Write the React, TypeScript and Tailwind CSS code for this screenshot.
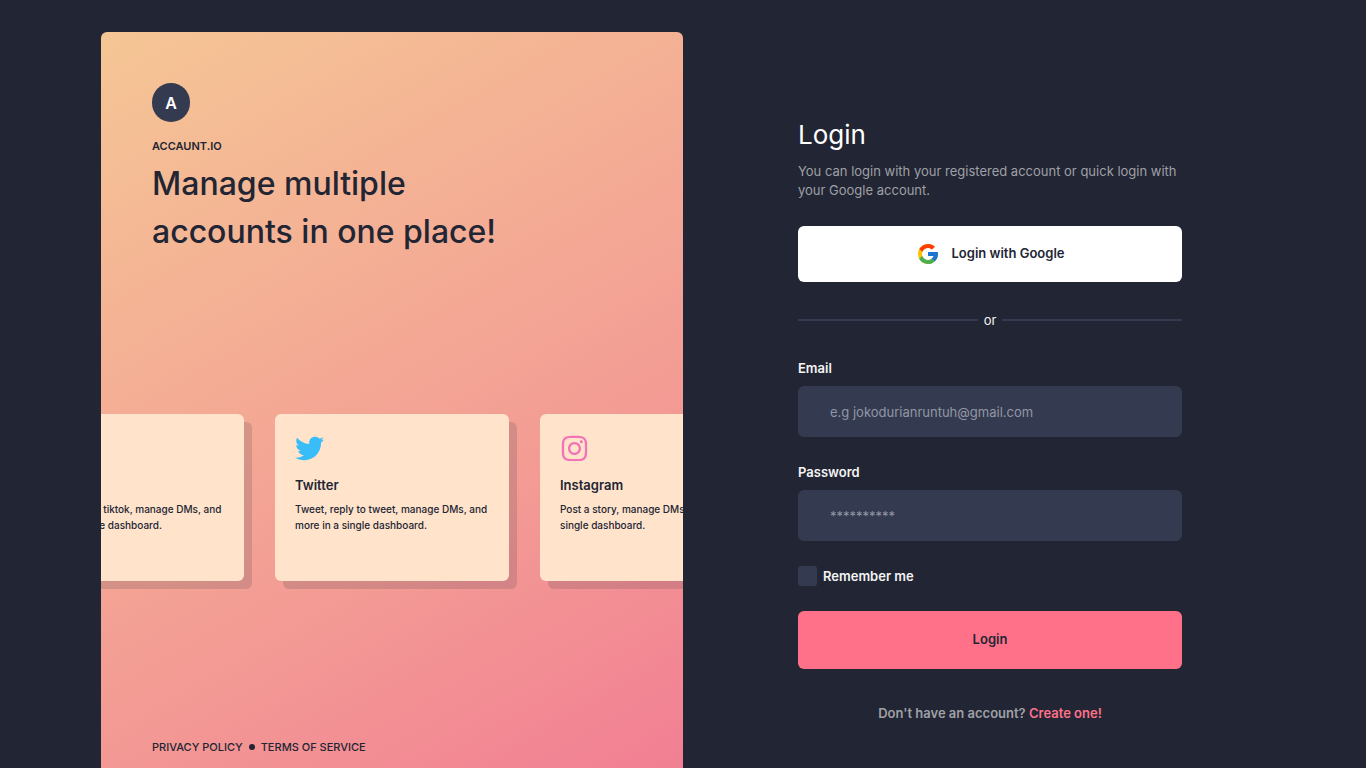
import { FaInstagram, FaTiktok, FaTwitter } from "react-icons/fa";
import { FcGoogle } from "react-icons/fc";
import type { ReactNode } from "react";

type Network = { name: string; text: string; icon: ReactNode };

const networks: Network[] = [
  {
    name: "Tiktok",
    text: "Post a video to tiktok, manage DMs, and more in a single dashboard.",
    icon: <FaTiktok className="size-[29px] text-[#222533]" />,
  },
  {
    name: "Twitter",
    text: "Tweet, reply to tweet, manage DMs, and more in a single dashboard.",
    icon: <FaTwitter className="size-[29px] text-[#38bdf8]" />,
  },
  {
    name: "Instagram",
    text: "Post a story, manage DMs, and more in a single dashboard.",
    icon: <FaInstagram className="size-[29px] text-[#f472b6]" />,
  },
];

function NetworkCard({ name, text, icon }: Network) {
  return (
    <article className="h-[167px] w-[234px] shrink-0 rounded-md bg-[#ffe3cb] py-5 pr-3 pl-5 shadow-[8px_8px_0_rgba(34,37,51,0.15)]">
      {icon}
      <h2 className="mt-3 text-[13px] leading-5 font-semibold">{name}</h2>
      <p className="mt-1.5 text-[10px] leading-4 font-medium">{text}</p>
    </article>
  );
}

function Field({ id, label, type, placeholder }: { id: string; label: string; type: string; placeholder: string }) {
  return (
    <div className="mb-[25px]">
      <label htmlFor={id} className="mb-2 block text-[13px] leading-5 font-semibold text-zinc-100">
        {label}
      </label>
      <input
        id={id}
        type={type}
        placeholder={placeholder}
        className="h-[51px] w-full rounded-md bg-[#343a50] px-8 text-[13px] text-zinc-100 outline-none placeholder:text-[#9297a5]"
      />
    </div>
  );
}

export default function App() {
  return (
    <main className="flex min-h-screen justify-center bg-[#222533] px-8 pt-8 font-['Inter',sans-serif] text-[#222533]">
      <div className="grid w-full max-w-[1164px] grid-cols-2">
        <section className="flex min-w-0 flex-col overflow-hidden rounded-t-md bg-[linear-gradient(150deg,#f5c695_0%,#f39a94_66%,#f27f93_100%)]">
          <header className="px-[51px] pt-[51px]">
            <div className="flex h-[39px] w-[38px] items-center justify-center rounded-full bg-[#343a50] text-base font-semibold text-white">
              A
            </div>
            <p className="mt-4 text-[11px] leading-4 font-semibold">ACCAUNT.IO</p>
            <h1 className="mt-1.5 max-w-[400px] text-[32px] leading-12 font-medium">
              Manage multiple accounts in one place!
            </h1>
          </header>
          <div className="my-auto flex justify-center gap-[31px]">
            {networks.map((network) => (
              <NetworkCard key={network.name} {...network} />
            ))}
          </div>
          <footer className="flex items-center gap-1.5 px-[51px] pb-[13px] text-[11px] leading-4 font-medium">
            <a href="#privacy">PRIVACY POLICY</a>
            <span className="size-1.5 rounded-full bg-[#222533]" />
            <a href="#terms">TERMS OF SERVICE</a>
          </footer>
        </section>

        <section className="flex min-w-0 flex-col items-center pt-[85px] pl-8">
          <form className="w-full max-w-[384px]" onSubmit={(event) => event.preventDefault()}>
            <h2 className="text-[26px] leading-9 text-white">Login</h2>
            <p className="mt-[9px] text-[13px] leading-[19px] text-[#9fa0a7]">
              You can login with your registered account or quick login with your Google account.
            </p>
            <button
              type="button"
              className="mt-[26px] flex h-14 w-full items-center justify-center gap-3 rounded-md bg-white text-[13px] font-semibold"
            >
              <FcGoogle className="size-6" />
              Login with Google
            </button>
            <div className="my-7 flex items-center gap-1.5 text-[13px] leading-5 text-zinc-100">
              <span className="h-0.5 flex-1 bg-[#343a50]" />
              or
              <span className="h-0.5 flex-1 bg-[#343a50]" />
            </div>
            <Field id="email" label="Email" type="email" placeholder="e.g jokodurianruntuh@gmail.com" />
            <Field id="password" label="Password" type="password" placeholder="**********" />
            <label htmlFor="remember" className="flex items-center gap-1.5 text-[13px] leading-5 font-semibold text-zinc-100">
              <input
                id="remember"
                type="checkbox"
                className="h-5 w-[19px] appearance-none rounded-[3px] bg-[#343a50] checked:bg-[#ff7189]"
              />
              Remember me
            </label>
            <button type="submit" className="mt-[25px] h-[58px] w-full rounded-md bg-[#ff7189] text-[13px] font-semibold">
              Login
            </button>
            <p className="mt-[34px] text-center text-[13px] leading-5 font-semibold text-[#9fa0a7]">
              Don't have an account?{" "}
              <a href="#register" className="text-[#ff7189]">
                Create one!
              </a>
            </p>
          </form>
        </section>
      </div>
    </main>
  );
}
